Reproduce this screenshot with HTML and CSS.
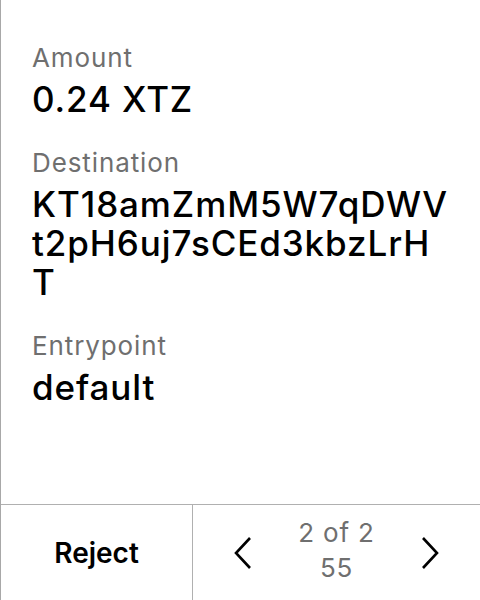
FILE: index.html
```html
<!DOCTYPE html>
<html>
<head>
<meta charset="utf-8">
<link rel="stylesheet" href="styles.css">
</head>
<body>
<div class="screen">
  <div class="content">
    <div class="field">
      <div class="label">Amount</div>
      <div class="value">0.24 XTZ</div>
    </div>
    <div class="field">
      <div class="label">Destination</div>
      <div class="value"><span class="line">KT18amZmM5W7qDWV</span><span class="line">t2pH6uj7sCEd3kbzLrH</span><span class="line">T</span></div>
    </div>
    <div class="field">
      <div class="label">Entrypoint</div>
      <div class="value">default</div>
    </div>
  </div>
  <div class="footer">
    <div class="reject">Reject</div>
    <div class="nav">
      <svg class="chev" width="20" height="34" viewBox="0 0 20 34"><path d="M17 2 L3 17 L17 32" fill="none" stroke="#000" stroke-width="2.6"/></svg>
      <div class="page">
        <div class="page-line">2 of 2</div>
        <div class="page-line">55</div>
      </div>
      <svg class="chev" width="20" height="34" viewBox="0 0 20 34"><path d="M3 2 L17 17 L3 32" fill="none" stroke="#000" stroke-width="2.6"/></svg>
    </div>
  </div>
</div>
</body>
</html>
```

FILE: styles.css
```css
html, body {
  margin: 0;
  padding: 0;
  background: #fff;
}
.screen {
  width: 480px;
  height: 600px;
  box-sizing: border-box;
  border-left: 1px solid #a8a8a8;
  display: flex;
  flex-direction: column;
  font-family: Inter, "Noto Sans", sans-serif;
  color: #000;
}
.content {
  flex: 1;
  padding: 42px 16px 0 31px;
  display: flex;
  flex-direction: column;
  gap: 28px;
}
.field {
  display: flex;
  flex-direction: column;
  gap: 6px;
}
.label {
  font-size: 26px;
  line-height: 32px;
  letter-spacing: 0.9px;
  color: #6f6f6f;
}
.value {
  font-size: 35px;
  line-height: 39px;
  font-weight: 500;
  letter-spacing: 0.9px;
}
.line {
  display: block;
  white-space: nowrap;
}
.footer {
  height: 95px;
  border-top: 1px solid #b0b0b0;
  display: flex;
}
.reject {
  width: 191px;
  border-right: 1px solid #b0b0b0;
  display: flex;
  align-items: center;
  justify-content: center;
  font-size: 28px;
  font-weight: 600;
}
.nav {
  flex: 1;
  display: flex;
  align-items: center;
  justify-content: space-between;
  padding: 0 40px 0 40px;
}
.page {
  margin-top: -6px;
  font-size: 26px;
  color: #6f6f6f;
  text-align: center;
  letter-spacing: 0.8px;
}
.page-line {
  line-height: 35px;
}
.chev {
  display: block;
}
```
